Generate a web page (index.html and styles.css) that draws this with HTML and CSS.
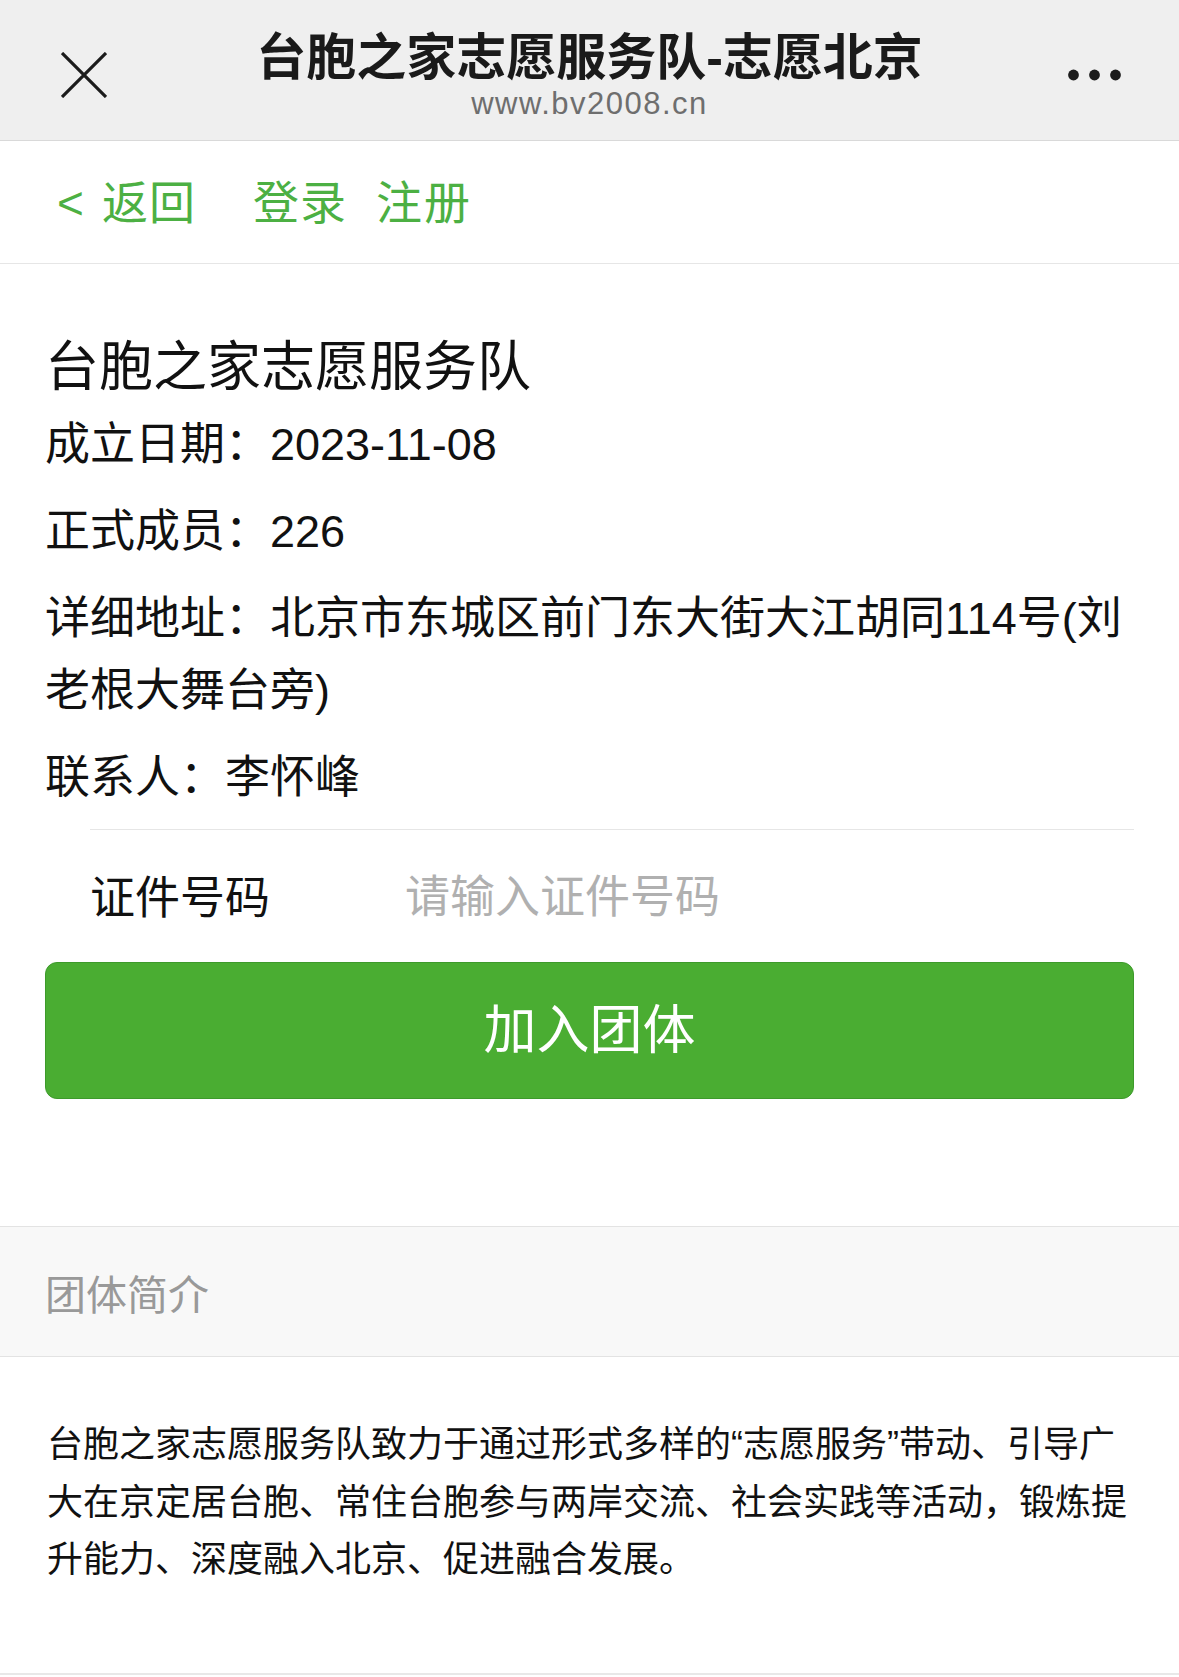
FILE: index.html
```html
<!DOCTYPE html>
<html lang="zh-CN">
<head>
<meta charset="utf-8">
<title>台胞之家志愿服务队-志愿北京</title>
<link rel="stylesheet" href="styles.css">
</head>
<body>
<header class="topbar">
  <div class="topbar-left">
    <svg class="icon-close" width="46" height="46" viewBox="0 0 46 46" aria-label="关闭">
      <path d="M1 1L45 45M45 1L1 45" stroke="#1b1b1b" stroke-width="3.2" fill="none"/>
    </svg>
  </div>
  <div class="topbar-title">
    <div class="title">台胞之家志愿服务队-志愿北京</div>
    <div class="url">www.bv2008.cn</div>
  </div>
  <div class="topbar-right">
    <svg class="icon-more" width="54" height="12" viewBox="0 0 54 12" aria-label="更多">
      <circle cx="5.5" cy="6" r="5.4" fill="#1b1b1b"/>
      <circle cx="26.5" cy="6" r="5.4" fill="#1b1b1b"/>
      <circle cx="47.5" cy="6" r="5.4" fill="#1b1b1b"/>
    </svg>
  </div>
</header>

<nav class="navbar">
  <a class="nav-link nav-back"><span class="chev">&lt;</span>返回</a>
  <a class="nav-link nav-login">登录</a>
  <a class="nav-link nav-register">注册</a>
</nav>

<main class="content">
  <h1 class="group-name">台胞之家志愿服务队</h1>
  <p class="info">成立日期：2023-11-08</p>
  <p class="info">正式成员：226</p>
  <p class="info">详细地址：北京市东城区前门东大街大江胡同114号(刘老根大舞台旁)</p>
  <p class="info">联系人：李怀峰</p>

  <div class="cell">
    <label class="cell-label" for="idno">证件号码</label>
    <input class="cell-input" id="idno" type="text" placeholder="请输入证件号码">
  </div>

  <button class="btn-primary" type="button">加入团体</button>
</main>

<section class="intro">
  <div class="intro-head">团体简介</div>
  <p class="intro-body">台胞之家志愿服务队致力于通过形式多样的“志愿服务”带动、引导广大在京定居台胞、常住台胞参与两岸交流、社会实践等活动，锻炼提升能力、深度融入北京、促进融合发展。</p>
</section>
</body>
</html>
```

FILE: styles.css
```css
html, body {
  margin: 0;
  padding: 0;
  background: #ffffff;
}

body {
  font-family: "Liberation Sans", "Noto Sans CJK SC", sans-serif;
  color: #111111;
}

/* ---------- top bar ---------- */
.topbar {
  height: 140px;
  background: #efefef;
  border-bottom: 1px solid #d9d9d9;
  display: grid;
  grid-template-columns: 1fr auto 1fr;
  align-items: start;
}

.topbar-left {
  padding: 52px 0 0 61px;
}

.icon-close {
  display: block;
}

.topbar-title {
  padding-top: 30px;
  text-align: center;
}

.title {
  font-size: 50px;
  line-height: 56px;
  font-weight: 700;
  color: #1a1a1a;
  white-space: nowrap;
}

.url {
  font-size: 31px;
  line-height: 36px;
  letter-spacing: 1.5px;
  color: #6e6e6e;
}

.topbar-right {
  justify-self: end;
  padding: 69px 57px 0 0;
}

.icon-more {
  display: block;
}

/* ---------- nav bar ---------- */
.navbar {
  height: 120px;
  padding-top: 2px;
  border-bottom: 1px solid #e6e6e6;
  display: flex;
  align-items: center;
  padding-left: 57px;
  font-size: 46px;
  line-height: 1;
  color: #4cb043;
}

.nav-link {
  color: inherit;
  text-decoration: none;
}

.chev {
  margin-right: 17px;
}

.nav-back {
  letter-spacing: 1px;
}

.nav-login {
  margin-left: 57px;
  letter-spacing: 1px;
}

.nav-register {
  margin-left: 29px;
  letter-spacing: 2px;
}

/* ---------- content ---------- */
.content {
  padding: 63px 45px 0 45px;
}

.group-name {
  margin: 0 0 2px;
  font-size: 54px;
  line-height: 80px;
  font-weight: 400;
  color: #111111;
}

.info {
  margin: 0 0 15px;
  font-size: 45px;
  line-height: 72px;
  color: #111111;
}

.cell {
  margin: 1px 0 0 45px;
  border-top: 1px solid #e6e6e6;
  height: 128px;
  display: flex;
  align-items: center;
}

.cell-label {
  width: 315px;
  flex: none;
  font-size: 45px;
  color: #111111;
}

.cell-input {
  flex: 1;
  min-width: 0;
  border: none;
  outline: none;
  background: transparent;
  padding: 8px 0 0;
  margin: 0;
  font-family: inherit;
  font-size: 45px;
  line-height: 60px;
  color: #111111;
}

.cell-input::placeholder {
  color: #b0b0b0;
}

.btn-primary {
  display: flex;
  align-items: center;
  justify-content: center;
  width: 100%;
  height: 137px;
  margin: 4px 0 127px;
  padding: 0;
  background: #4aad32;
  border: 1px solid #3d9a2b;
  border-radius: 12px;
  color: #ffffff;
  font-family: inherit;
  font-size: 53px;
  line-height: 1;
}

/* ---------- intro ---------- */
.intro-head {
  height: 129px;
  background: #f8f8f8;
  border-top: 1px solid #e3e3e3;
  border-bottom: 1px solid #e3e3e3;
  display: flex;
  align-items: center;
  padding-left: 45px;
  font-size: 41px;
  color: #999999;
}

.intro-body {
  margin: 0;
  padding: 59px 45px 84px 47px;
  font-size: 36px;
  line-height: 57.5px;
  color: #111111;
  border-bottom: 2px solid #e8e8e8;
}
```
